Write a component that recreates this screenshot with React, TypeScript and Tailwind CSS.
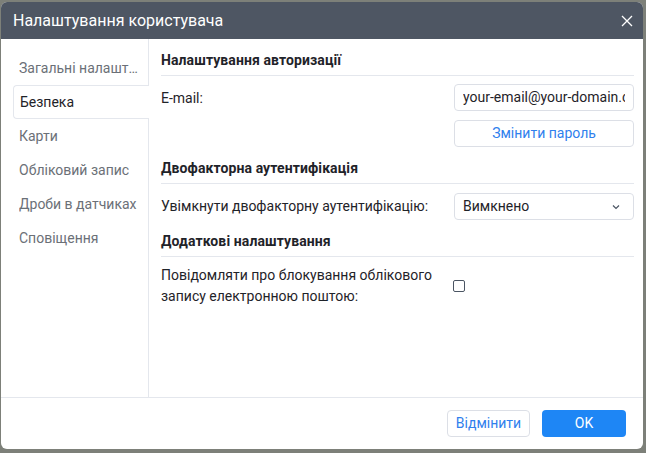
import React from "react";

const items = ["Загальні налаштування", "Безпека", "Карти", "Обліковий запис", "Дроби в датчиках", "Сповіщення"];

function Section({ title }: { title: string }) {
  return (
    <div className="pb-[5px] leading-[20px] border-b border-[#e4e7ed] text-[14px] font-bold text-[#1f2329] tracking-[0.1px]">
      {title}
    </div>
  );
}

export default function App() {
  return (
    <div
      className="w-[646px] h-[453px] bg-[#7d8079] pt-[2px] pl-[1px] overflow-hidden"
      style={{ fontFamily: "Roboto, 'Noto Sans', sans-serif" }}
    >
      <div className="w-[642px] h-[447px] bg-white rounded-[6px] overflow-hidden flex flex-col">
        <div className="h-[37px] bg-[#4e5663] flex items-center justify-between pl-[12px] pr-[9px] shrink-0">
          <span className="text-white text-[16px]">Налаштування користувача</span>
          <svg width="14" height="14" viewBox="0 0 14 14" className="text-white">
            <path d="M2 2 L12 12 M12 2 L2 12" stroke="currentColor" strokeWidth="1.3" />
          </svg>
        </div>
        <div className="flex flex-1 border-b border-[#e4e7ed]">
          <div className="w-[148px] border-r border-[#e4e7ed] pt-[12px] pl-[12px] shrink-0">
            {items.map((it, i) =>
              i === 1 ? (
                <div
                  key={it}
                  className="h-[34px] -mr-px bg-white border border-r-0 border-[#e4e7ed] rounded-l-[4px] flex items-center pl-[6px] text-[14px] text-[#1f2329] relative"
                >
                  {it}
                </div>
              ) : (
                <div key={it} className="h-[34px] flex items-center pl-[6px] pr-[8px] text-[14px] text-[#6b7077]">
                  <span className="truncate">{it}</span>
                </div>
              )
            )}
          </div>
          <div className="flex-1 pl-[12px] pr-[9px] pt-[11px]">
            <Section title="Налаштування авторизації" />
            <div className="flex items-start justify-between pt-[8px]">
              <span className="text-[14px] text-[#1f2329] pt-[4px]">E-mail:</span>
              <div className="w-[180px] flex flex-col gap-[9px]">
                <div className="h-[27px] border border-[#dcdfe6] rounded-[4px] flex items-center px-[8px] text-[14px] text-[#1f2329]">
                  <div className="overflow-hidden whitespace-nowrap">your-email@your-domain.com</div>
                </div>
                <div className="h-[27px] border border-[#dcdfe6] rounded-[4px] flex items-center justify-center text-[14px] text-[#2f80ed]">
                  Змінити пароль
                </div>
              </div>
            </div>
            <div className="mt-[11px]">
              <Section title="Двофакторна аутентифікація" />
            </div>
            <div className="flex items-center justify-between pt-[9px]">
              <span className="text-[14px] text-[#1f2329]">Увімкнути двофакторну аутентифікацію:</span>
              <div className="w-[180px] h-[27px] border border-[#dcdfe6] rounded-[4px] flex items-center justify-between pl-[8px] pr-[12px] text-[14px] text-[#1f2329]">
                <span>Вимкнено</span>
                <svg width="10" height="10" viewBox="0 0 10 10">
                  <path d="M2 3.5 L5 6.5 L8 3.5" fill="none" stroke="#4b5563" strokeWidth="1.2" />
                </svg>
              </div>
            </div>
            <div className="mt-[11px]">
              <Section title="Додаткові налаштування" />
            </div>
            <div className="flex items-center pt-[8px]">
              <span className="w-[292px] text-[14px] leading-[21px] text-[#1f2329]">
                Повідомляти про блокування облікового запису електронною поштою:
              </span>
              <div className="w-[12px] h-[12px] border border-[#4b5563] rounded-[2px] bg-white" />
            </div>
          </div>
        </div>
        <div className="h-[51px] flex items-center justify-end gap-[12px] pr-[17px] shrink-0">
          <div className="w-[83px] h-[27px] border border-[#dcdfe6] rounded-[4px] flex items-center justify-center text-[14px] text-[#2f80ed]">
            Відмінити
          </div>
          <div className="w-[84px] h-[27px] bg-[#1e86f5] rounded-[4px] flex items-center justify-center text-[14px] text-white">
            OK
          </div>
        </div>
      </div>
    </div>
  );
}
